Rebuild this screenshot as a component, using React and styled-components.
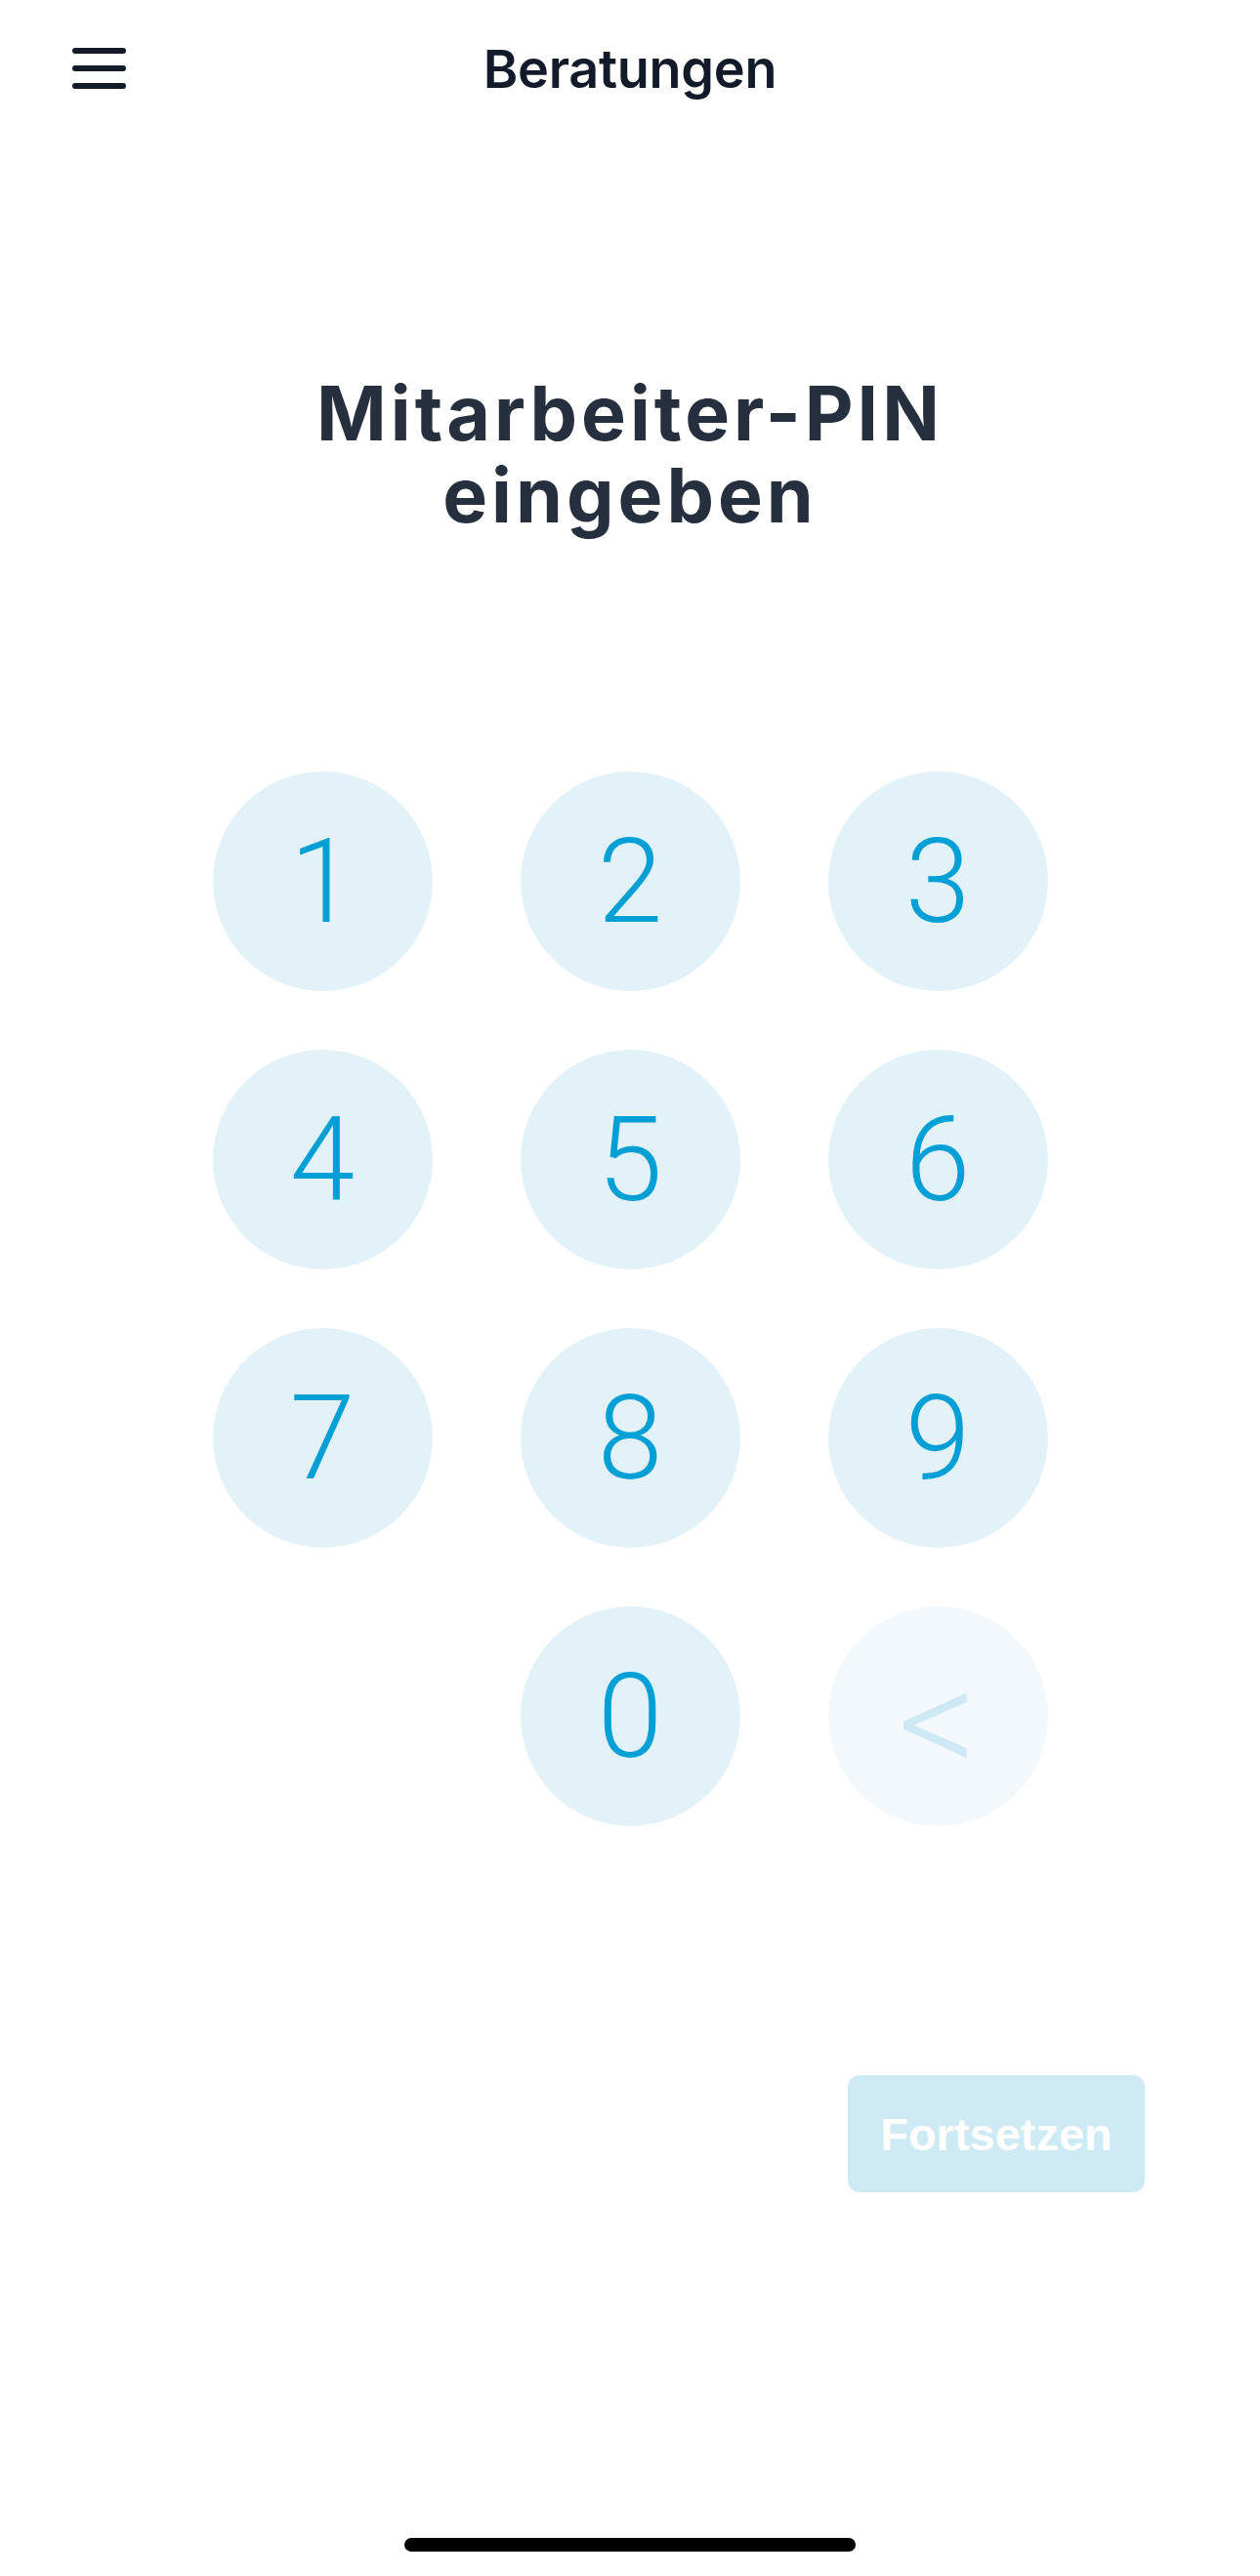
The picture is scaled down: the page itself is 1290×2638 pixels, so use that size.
import React from 'react'
import styled, { createGlobalStyle } from 'styled-components'

const GlobalStyle = createGlobalStyle`
  html, body {
    margin: 0;
    padding: 0;
    background: #ffffff;
  }
  * {
    box-sizing: border-box;
  }
`;

const Screen = styled.div`
  width: 1290px;
  height: 2638px;
  display: flex;
  flex-direction: column;
  background: #ffffff;
  font-family: Inter, "Noto Sans", sans-serif;
`;

const NavBar = styled.header`
  height: 140px;
  display: grid;
  grid-template-columns: 1fr auto 1fr;
  align-items: center;
  padding: 0 74px;
`;

const MenuButton = styled.button`
  width: 55px;
  height: 42px;
  padding: 0;
  border: none;
  background: none;
  display: flex;
  flex-direction: column;
  justify-content: space-between;
  justify-self: start;
`;

const MenuLine = styled.span`
  display: block;
  height: 6px;
  width: 100%;
  border-radius: 3px;
  background: #131a29;
`;

const NavTitle = styled.h1`
  margin: 0;
  font-size: 54px;
  font-weight: 600;
  color: #131a29;
  letter-spacing: -0.3px;
`;

const Heading = styled.h2`
  margin: 241px 0 0;
  text-align: center;
  font-size: 77px;
  line-height: 84px;
  font-weight: 700;
  letter-spacing: 4px;
  color: #262f3d;
`;

const Keypad = styled.div`
  margin-top: 241px;
  display: grid;
  grid-template-columns: repeat(3, 225px);
  grid-auto-rows: 225px;
  column-gap: 90px;
  row-gap: 60px;
  justify-content: center;
`;

const Key = styled.button`
  width: 225px;
  height: 225px;
  border: none;
  border-radius: 50%;
  padding: 0;
  display: flex;
  align-items: center;
  justify-content: center;
  background: ${({ $muted }) => ($muted ? '#f2f8fb' : '#e3f2f9')};
  color: ${({ $muted }) => ($muted ? '#cfe9f4' : '#00a0d6')};
  font-family: Roboto, "Liberation Sans", sans-serif;
  font-weight: 300;
  font-size: ${({ $muted }) => ($muted ? '160px' : '120px')};
  line-height: 1;
`;

const KeyGlyph = styled.span`
  display: block;
  transform: translateY(${({ $shift }) => $shift || 0}px);
`;

const Blank = styled.div``;

const Footer = styled.div`
  margin-top: 255px;
  display: flex;
  justify-content: flex-end;
  padding-right: 118px;
`;

const ContinueButton = styled.button`
  width: 304px;
  height: 120px;
  border: none;
  border-radius: 12px;
  background: #cdeaf5;
  color: #ffffff;
  font-family: "Liberation Sans", Arial, sans-serif;
  font-weight: 700;
  font-size: 47px;
`;

const HomeArea = styled.div`
  margin-top: auto;
  height: 39px;
  display: flex;
  justify-content: center;
`;

const HomeIndicator = styled.div`
  width: 462px;
  height: 14px;
  border-radius: 7px;
  background: #000000;
`;

const keys = ['1', '2', '3', '4', '5', '6', '7', '8', '9'];

export default function App() {
  return (
    <>
      <GlobalStyle />
      <Screen>
        <NavBar>
          <MenuButton aria-label="Menü">
            <MenuLine />
            <MenuLine />
            <MenuLine />
          </MenuButton>
          <NavTitle>Beratungen</NavTitle>
          <div />
        </NavBar>

        <Heading>
          Mitarbeiter-PIN
          <br />
          eingeben
        </Heading>

        <Keypad>
          {keys.map((k) => (
            <Key key={k}>{k}</Key>
          ))}
          <Blank />
          <Key>0</Key>
          <Key $muted aria-label="Löschen">
            <KeyGlyph $shift={6}>&lt;</KeyGlyph>
          </Key>
        </Keypad>

        <Footer>
          <ContinueButton disabled>Fortsetzen</ContinueButton>
        </Footer>

        <HomeArea>
          <HomeIndicator />
        </HomeArea>
      </Screen>
    </>
  );
}
